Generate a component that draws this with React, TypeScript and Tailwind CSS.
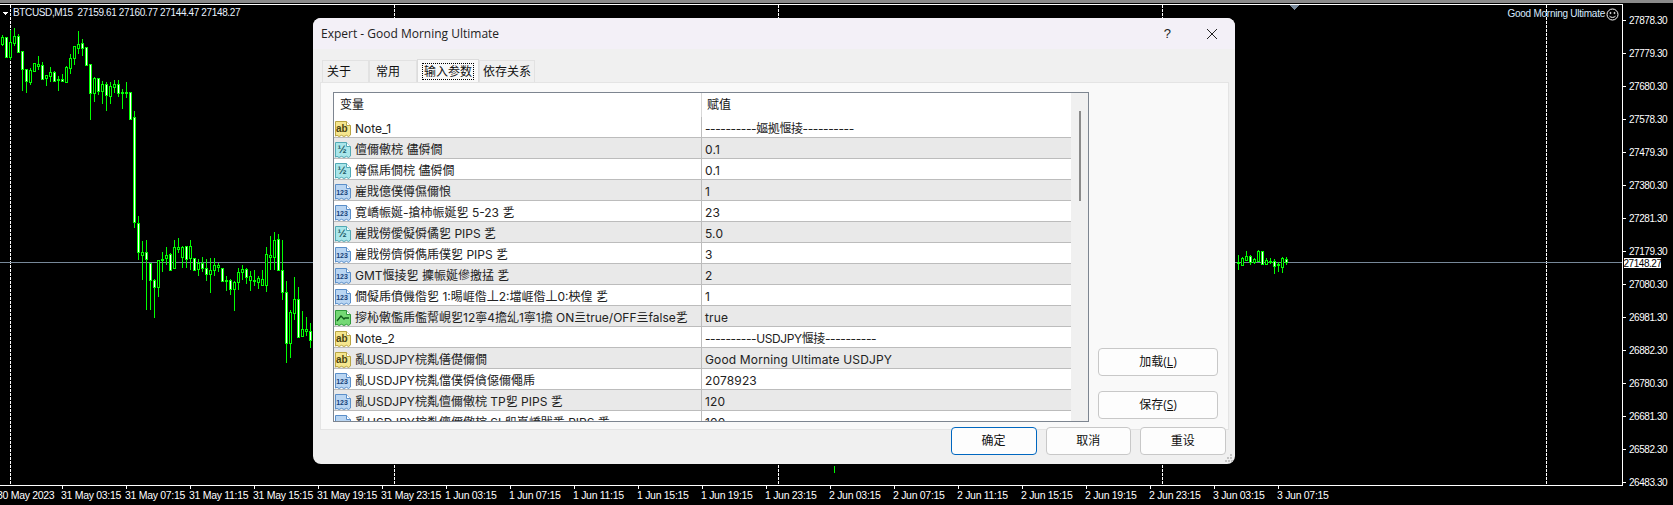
import React from "react";

/* Velas do gráfico: [x, pavio topo, pavio base, corpo topo, corpo base, preenchida] */
type Candle = [number, number, number, number, number, number];

const leftValues: number[][] = [
  [35, 46, 37, 44, 0], [37, 58, 37, 57, 1], [30, 60, 42, 57, 0], [28, 46, 36, 43, 0], [34, 53, 36, 52, 1],
  [51, 91, 51, 69, 1], [69, 93, 69, 81, 1], [68, 85, 70, 82, 0], [63, 71, 63, 71, 0], [56, 70, 64, 66, 0],
  [62, 80, 65, 79, 1], [75, 86, 75, 78, 0], [67, 82, 72, 76, 0], [71, 81, 72, 81, 1], [76, 91, 79, 80, 0],
  [74, 82, 79, 81, 1], [66, 82, 67, 82, 0], [54, 74, 58, 68, 0], [46, 65, 46, 58, 0], [31, 54, 44, 48, 0],
  [39, 56, 43, 48, 1], [47, 65, 47, 65, 1], [64, 120, 64, 93, 1], [77, 102, 78, 93, 0], [78, 95, 78, 91, 1],
  [81, 104, 84, 91, 0], [82, 111, 84, 95, 1], [82, 104, 86, 96, 0], [80, 93, 84, 87, 0], [80, 97, 84, 93, 1],
  [89, 109, 92, 93, 0], [82, 98, 92, 93, 0], [92, 119, 92, 119, 1], [111, 228, 117, 222, 1], [216, 260, 223, 252, 1],
  [241, 280, 252, 255, 0], [240, 310, 252, 259, 1], [263, 310, 263, 280, 1], [279, 318, 280, 287, 1], [260, 297, 260, 287, 0],
  [252, 272, 259, 260, 0], [247, 265, 255, 258, 0], [253, 271, 254, 270, 1], [240, 268, 247, 268, 0], [238, 253, 247, 249, 0],
  [246, 268, 247, 257, 0], [246, 268, 246, 259, 1], [240, 270, 246, 258, 0], [258, 270, 258, 270, 1], [259, 276, 263, 269, 0],
  [257, 272, 263, 268, 1], [259, 281, 268, 274, 1], [258, 293, 270, 274, 0], [258, 276, 265, 270, 0], [263, 272, 265, 267, 0],
  [268, 281, 268, 281, 1], [276, 291, 280, 281, 0], [279, 295, 280, 289, 1], [281, 311, 282, 289, 0], [268, 290, 272, 282, 0],
  [265, 280, 269, 272, 0], [268, 284, 269, 277, 1], [271, 291, 276, 280, 0], [270, 286, 280, 281, 0], [276, 289, 278, 282, 0],
  [270, 286, 279, 285, 0], [247, 292, 254, 285, 0], [236, 270, 255, 257, 0], [232, 270, 240, 257, 0], [234, 270, 239, 270, 1],
  [240, 300, 270, 292, 1], [281, 363, 292, 343, 1], [310, 358, 312, 343, 0], [277, 320, 299, 313, 0], [287, 338, 299, 337, 1],
  [311, 337, 329, 336, 0], [317, 336, 329, 331, 0], [323, 348, 331, 340, 1],
];

const candles: Candle[] = [
  ...leftValues.map((v, i) => [2 + i * 4, v[0], v[1], v[2], v[3], v[4]] as Candle),
  [1238, 255, 270, 262, 263, 0], [1242, 257, 266, 258, 265, 0], [1246, 251, 261, 256, 260, 0],
  [1250, 255, 265, 256, 262, 1], [1254, 258, 264, 259, 262, 0], [1258, 250, 262, 251, 261, 0],
  [1262, 251, 265, 251, 264, 1], [1266, 258, 264, 260, 264, 0], [1270, 258, 264, 261, 262, 0],
  [1274, 259, 274, 261, 266, 1], [1278, 262, 272, 264, 265, 0], [1282, 257, 273, 258, 267, 0],
  [1286, 257, 265, 259, 262, 1],
];

const dottedLines = [10, 394, 778, 1162, 1546];

const prices = [
  "27878.30", "27779.30", "27680.30", "27578.30", "27479.30", "27380.30", "27281.30", "27179.30",
  "27080.30", "26981.30", "26882.30", "26780.30", "26681.30", "26582.30", "26483.30",
];

const times = [
  "30 May 2023", "31 May 03:15", "31 May 07:15", "31 May 11:15", "31 May 15:15", "31 May 19:15", "31 May 23:15",
  "1 Jun 03:15", "1 Jun 07:15", "1 Jun 11:15", "1 Jun 15:15", "1 Jun 19:15", "1 Jun 23:15",
  "2 Jun 03:15", "2 Jun 07:15", "2 Jun 11:15", "2 Jun 15:15", "2 Jun 19:15", "2 Jun 23:15",
  "3 Jun 03:15", "3 Jun 07:15",
];

type Kind = "ab" | "half" | "num" | "line";

/* Linhas da tabela de parâmetros */
const rows: { kind: Kind; label: string; value: string }[] = [
  { kind: "ab", label: "Note_1", value: "----------嫗拠愝掕----------" },
  { kind: "half", label: "儃儞僌梡 儘僢僩", value: "0.1" },
  { kind: "half", label: "僔儑乕僩梡 儘僢僩", value: "0.1" },
  { kind: "num", label: "嵟戝億僕僔儑儞悢", value: "1" },
  { kind: "num", label: "寛嶠帪娫-搶柿帪娫乮 5-23 乯", value: "23" },
  { kind: "half", label: "嵟戝僗僾儗僢僪乮 PIPS 乯", value: "5.0" },
  { kind: "num", label: "嵟戝僗儕僢儁乕僕乮 PIPS 乯", value: "3" },
  { kind: "num", label: "GMT愝掕乮 攈帪娫傪撽掹 乯", value: "2" },
  { kind: "num", label: "僩儗乕僨僟偺乮 1:晹崕偺丄2:壋崕偺丄0:柍偟 乯", value: "1" },
  { kind: "line", label: "摉杺僌儖乕儖幚峴乮12寧4擔乣1寧1擔 ON亖true/OFF亖false乯", value: "true" },
  { kind: "ab", label: "Note_2", value: "----------USDJPY愝掕----------" },
  { kind: "ab", label: "亂USDJPY梡亃僐儊儞僩", value: "Good Morning Ultimate USDJPY" },
  { kind: "num", label: "亂USDJPY梡亃儅僕僢僋僫儞僶乕", value: "2078923" },
  { kind: "num", label: "亂USDJPY梡亃儃儞僌梡 TP乮 PIPS 乯", value: "120" },
  { kind: "num", label: "亂USDJPY梡亃儃儞僌梡 SL乮嶌嶠戝乯 PIPS 乯", value: "100" },
];

const iconColors: Record<Kind, { fill: string; stroke: string; ink: string; text: string }> = {
  ab: { fill: "#f5e68e", stroke: "#b9a544", ink: "#4a4210", text: "ab" },
  half: { fill: "#a9e6ea", stroke: "#52a9b4", ink: "#1c5a66", text: "½" },
  num: { fill: "#b9d5f2", stroke: "#5b8fc9", ink: "#17427a", text: "123" },
  line: { fill: "#74d874", stroke: "#2f9a3a", ink: "#0c5a18", text: "" },
};

/* Ícone de documento com canto dobrado */
function TypeIcon({ kind }: { kind: Kind }) {
  const c = iconColors[kind];
  return (
    <svg width="17" height="17" viewBox="0 0 17 17" className="mt-[2px] shrink-0">
      <path
        d="M0.5 1.5h11l4 4v9.5l-2 1.5-2-1.2-2.5 1.2-2.5-1.2-2.5 1.2-2-1.2-1.5.8z"
        fill={c.fill}
        stroke={c.stroke}
      />
      <path d="M11.5 1.5v4h4" fill="#ffffff" stroke={c.stroke} />
      {kind === "line" ? (
        <path d="M2 12l4-5 3 3 1-1h4" fill="none" stroke={c.ink} strokeWidth="1.3" />
      ) : (
        <text
          x={kind === "ab" ? 6.8 : 7}
          y={kind === "half" ? 11.5 : 12}
          textAnchor="middle"
          fill={c.ink}
          fontFamily="Liberation Sans, sans-serif"
          fontWeight="bold"
          fontSize={kind === "num" ? 7 : kind === "ab" ? 10 : 11}
        >
          {c.text}
        </text>
      )}
    </svg>
  );
}

/* Botão padrão do diálogo */
function DialogButton({ children, primary, className }: { children: React.ReactNode; primary?: boolean; className: string }) {
  return (
    <button
      type="button"
      className={`h-[27.5px] rounded-[4px] border bg-[#fdfdfd] text-[12px] text-[#111] ${
        primary ? "border-[#0067c0]" : "border-[#c8c8c8]"
      } ${className}`}
    >
      {children}
    </button>
  );
}

function Tab({ label, active, className }: { label: string; active?: boolean; className: string }) {
  if (active) {
    return (
      <div className={`relative z-10 -mt-[1px] flex h-[23px] items-center justify-center border border-b-0 border-[#dcdcdc] bg-[#f9f9f9] ${className}`}>
        <span className="border border-dotted border-black px-[1px] leading-[15px]">{label}</span>
      </div>
    );
  }
  return (
    <div className={`flex h-[22px] items-center border border-b-0 border-[#e2e2e2] bg-[#f0f0f0] ${className}`}>
      {label}
    </div>
  );
}

/* Janela modal "Expert" */
function ExpertDialog() {
  return (
    <div className="absolute left-[313px] top-[18px] flex h-[446px] w-[922px] flex-col rounded-[8px] bg-[#f0f0f0] text-[12px] text-[#111] [font-family:'Open_Sans','Noto_Sans_CJK_SC',sans-serif]">
      {/* Barra de título */}
      <div className="flex h-[31px] shrink-0 items-center rounded-t-[8px] bg-[#f3f0f7] pl-[8px]">
        <span className="text-[#222]">Expert - Good Morning Ultimate</span>
        <span className="ml-auto mr-[35px] text-[13px] text-[#222] [font-family:'Liberation_Sans',sans-serif]">?</span>
        <svg width="12" height="12" viewBox="0 0 12 12" className="mr-[17px]">
          <path d="M1 1l10 10M11 1L1 11" stroke="#222" strokeWidth="1" />
        </svg>
      </div>

      {/* Abas */}
      <div className="mt-[11px] flex h-[22px] shrink-0 pl-[9px]">
        <Tab label="关于" className="w-[47px] pl-[4px]" />
        <Tab label="常用" className="w-[48px] pl-[6px]" />
        <Tab label="输入参数" active className="w-[62px]" />
        <Tab label="依存关系" className="w-[56px] pl-[3px]" />
      </div>

      {/* Painel da aba */}
      <div className="mx-[7px] mr-[6px] flex h-[348px] shrink-0 border border-[#e4e4e4] bg-[#f9f9f9] pl-[12px] pt-[9px]">
        <div className="flex h-[330px] w-[756px] shrink-0 overflow-hidden border border-[#7d8590] bg-white">
          <div className="min-w-0 flex-1 [font-family:'Inter','Noto_Sans_CJK_SC',sans-serif]">
            <div className="flex h-[24px] items-center">
              <div className="w-[368px] border-r border-[#d8d8d8] pl-[6px] leading-[24px]">变量</div>
              <div className="pl-[5px]">赋值</div>
            </div>
            {rows.map((row, i) => (
              <div
                key={row.label}
                className={`flex h-[21px] border-b border-[#bcbcbc] ${i % 2 === 1 ? "bg-[#e9e9e9]" : "bg-white"}`}
              >
                <div className="flex w-[368px] shrink-0 items-center overflow-hidden whitespace-nowrap border-r border-[#bcbcbc] pl-[1px]">
                  <TypeIcon kind={row.kind} />
                  <span className="ml-[3px] pt-[3px] text-[#222]">{row.label}</span>
                </div>
                <div
                  className={`flex items-center whitespace-nowrap pl-[3px] pt-[3px] text-[#222] ${
                    row.value.startsWith("-") ? "tracking-[-0.4px]" : "tracking-[0.15px]"
                  }`}
                >
                  {row.value}
                </div>
              </div>
            ))}
          </div>
          {/* Barra de rolagem */}
          <div className="w-[17px] shrink-0 bg-[#f0f0f0] pl-[8px] pt-[18px]">
            <div className="h-[90px] w-[2px] bg-[#8a8a8a]" />
          </div>
        </div>

        <div className="ml-[9px] flex w-[120px] flex-col gap-[15.5px] pt-[256px]">
          <DialogButton className="w-[120px]">加载(<u>L</u>)</DialogButton>
          <DialogButton className="w-[120px]">保存(<u>S</u>)</DialogButton>
        </div>
      </div>

      {/* Botões de rodapé */}
      <div className="relative z-10 -mt-[3px] flex justify-end gap-[9px] pr-[9.5px]">
        <DialogButton primary className="w-[86px]">确定</DialogButton>
        <DialogButton className="w-[85.5px]">取消</DialogButton>
        <DialogButton className="w-[85.5px]">重设</DialogButton>
      </div>

      {/* Alça de redimensionamento */}
      <svg width="8" height="8" viewBox="0 0 8 8" className="absolute bottom-[2px] right-[2px]" fill="#c4c4c4">
        <rect x="5" y="0" width="2" height="2" />
        <rect x="2" y="3" width="2" height="2" />
        <rect x="5" y="3" width="2" height="2" />
        <rect x="0" y="6" width="2" height="2" />
        <rect x="3" y="6" width="2" height="2" />
        <rect x="6" y="6" width="2" height="2" />
      </svg>
    </div>
  );
}

/* Desenho do gráfico de velas */
function Chart() {
  return (
    <svg width="1622" height="480" viewBox="0 5 1622 480" className="absolute left-0 top-0" shapeRendering="crispEdges">
      {dottedLines.map((x) => (
        <line key={x} x1={x + 0.5} x2={x + 0.5} y1="5" y2="485" stroke="#fff" strokeDasharray="3 1" />
      ))}
      <line x1="0" x2="1622" y1="262.5" y2="262.5" stroke="#778899" />
      {candles.map(([x, wt, wb, bt, bb, filled]) => (
        <g key={x}>
          <line x1={x + 0.5} x2={x + 0.5} y1={wt} y2={wb} stroke="#00ff00" />
          <rect x={x - 0.5} y={bt + 0.5} width="2" height={bb - bt} fill={filled ? "#fff" : "#000"} stroke="#00ff00" />
        </g>
      ))}
      <line x1="834.5" x2="834.5" y1="466" y2="473" stroke="#00ff00" />
      <polygon points="1289,5 1300,5 1294.5,10" fill="#778899" />
      <polygon points="2,12 8,12 5,15" fill="#fff" />
    </svg>
  );
}

export default function App() {
  return (
    <div className="relative flex h-[505px] w-[1673px] flex-col overflow-hidden bg-black text-[11px] text-white [font-family:'Liberation_Sans','Noto_Sans_CJK_SC',sans-serif]">
      <div className="h-[4px] shrink-0 bg-black">
        <div className="h-[3px] bg-[#8a8a8a]" />
      </div>

      <div className="flex h-[482px] shrink-0">
        <div className="relative h-[482px] w-[1623px] shrink-0 border-y border-r border-white">
          <Chart />
          {/* Legenda superior esquerda */}
          <div className="absolute left-[13px] top-[1px] whitespace-pre text-[10px] leading-[14px] tracking-[-0.36px] text-[#e8f2ff]">
            BTCUSD,M15  27159.61 27160.77 27144.47 27148.27
          </div>
          {/* Rótulo do EA */}
          <div className="absolute right-[3px] top-[2px] flex items-center gap-[1px] whitespace-nowrap text-[10px] leading-[14px] tracking-[-0.25px] text-[#d8ebff]">
            Good Morning Ultimate
            <svg width="13" height="13" viewBox="0 0 13 13" fill="none" stroke="#fff">
              <circle cx="6.5" cy="6.5" r="5.5" />
              <circle cx="4.5" cy="5" r="0.6" />
              <circle cx="8.5" cy="5" r="0.6" />
              <path d="M3.5 8.2c1.5 1.6 4.5 1.6 6 0" />
            </svg>
          </div>
        </div>

        {/* Eixo de preços */}
        <div className="relative min-w-0 flex-1">
          {prices.map((p) => (
            <div key={p} className="flex h-[33px] items-center">
              <span className="h-px w-[3px] bg-white" />
              <span className="ml-[3px] text-[10px] tracking-[-0.45px]">{p}</span>
            </div>
          ))}
          <div className="absolute left-[1px] top-[254px] flex h-[10px] w-[37px] items-center justify-center bg-white text-[10px] tracking-[-0.45px] text-black">
            27148.27
          </div>
        </div>
      </div>

      {/* Eixo de tempo */}
      <div className="-ml-[2px] flex shrink-0">
        {times.map((t) => (
          <div key={t} className="w-[64px] shrink-0">
            <div className="h-[3px] w-px bg-white" />
            <div className="-ml-[1px] whitespace-nowrap text-[10.5px] leading-[13px] tracking-[-0.3px]">{t}</div>
          </div>
        ))}
      </div>

      <ExpertDialog />
    </div>
  );
}
